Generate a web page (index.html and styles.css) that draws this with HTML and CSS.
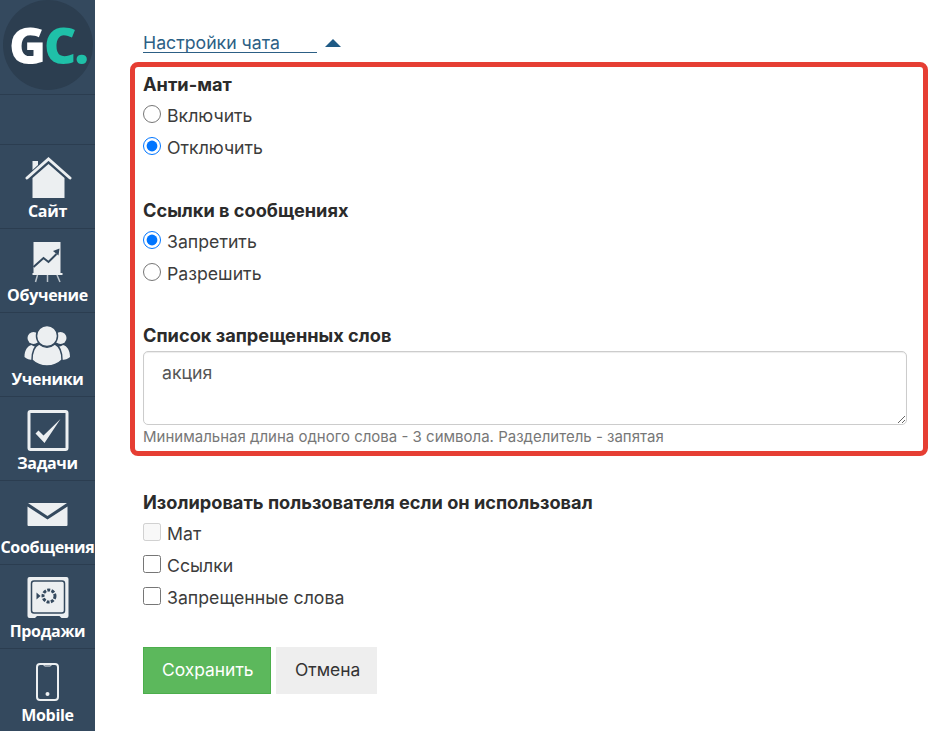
FILE: index.html
```html
<!DOCTYPE html>
<html lang="ru">
<head>
<meta charset="utf-8">
<title>Настройки чата</title>
<link rel="stylesheet" href="styles.css">
</head>
<body>
<div class="page">
  <nav class="sidebar">
    <div class="logo-row"><div class="logo"><span class="g">G</span><span class="c">C.</span></div></div>
    <div class="spacer-row"></div>
    <a class="item">
      <svg class="icon" viewBox="0 0 48 42"><path class="fill" d="M8.500 4H14v4l-5.500 5zM24.500 7 8.500 21v20h32V21z"/><path class="line" d="M3 21 24.500 2 46 21"/></svg>
      <span>Сайт</span>
    </a>
    <a class="item">
      <svg class="icon" viewBox="0 0 48 42"><path class="fill" d="M9.500 1h27v31h-27z"/><path class="fill" d="M8.500 32h30v2h-30z"/><path class="bars" d="M13.500 34l-2 7M23.500 34v7M33 34l3 7"/><path class="trend" d="M9.500 26l10-9 5 4 8-8"/><path class="trendhead" d="M29 10l6.500-2.500-1 7z"/></svg>
      <span>Обучение</span>
    </a>
    <a class="item">
      <svg class="icon" viewBox="0 0 48 42"><circle class="fill" cx="9.500" cy="13" r="6"/><circle class="fill" cx="36.500" cy="13" r="6"/><path class="fill" d="M.5 32c0-7 3-11 7-12 3 2 5 2 7 1-3 3-5 8-5 14-4 0-7-1-9-3zM46 32c0-7-3-11-7-12-3 2-5 2-7 1 3 3 5 8 5 14 4 0 7-1 9-3z"/><circle class="fill head" cx="23" cy="11" r="10.500"/><path class="fill head" d="M8 35c0-9 3-14 7-16 5 4 11 4 16 0 4 2 7 7 7 16-4 4-9 6-15 6s-11-2-15-6z"/></svg>
      <span>Ученики</span>
    </a>
    <a class="item">
      <svg class="icon" viewBox="0 0 48 42"><rect class="box" x="5" y="2.500" width="38" height="38" rx="1.500"/><path class="fill" d="M11.500 24.500l3-3 5 5L36.500 10 20.500 34z"/></svg>
      <span>Задачи</span>
    </a>
    <a class="item">
      <svg class="icon" viewBox="0 0 48 42"><path class="fill" d="M4 10h39L23.500 23z"/><path class="fill" d="M3.500 13.500l20 13 20-13V32a1 1 0 0 1-1 1h-38a1 1 0 0 1-1-1z"/></svg>
      <span>Сообщения</span>
    </a>
    <a class="item">
      <svg class="icon" viewBox="0 0 48 42"><path class="fill" d="M5.500 0h37a2 2 0 0 1 2 2v37a2 2 0 0 1-2 2h-5l-2-2H13l-2 2H5.500a2 2 0 0 1-2-2V2a2 2 0 0 1 2-2z"/><rect class="safe" x="7.500" y="4" width="33" height="32" rx="2.500"/><circle class="dial" cx="25" cy="19" r="6"/><path class="dark" d="M12.500 15.500l4 3.500-4 3.500z"/></svg>
      <span>Продажи</span>
    </a>
    <a class="item">
      <svg class="icon" viewBox="0 0 48 42"><path class="phone" d="M16 3h15a3 3 0 0 1 3 3v30a3 3 0 0 1-3 3H16a3 3 0 0 1-3-3V6a3 3 0 0 1 3-3z"/><path class="phone thin" d="M19 3l1.500 2h6L28 3"/><circle class="fill" cx="23.500" cy="33" r="2"/></svg>
      <span>Mobile</span>
    </a>
  </nav>
  <main class="main">
    <div class="toggle">
      <a class="toggle-link">Настройки чата</a>
      <span class="caret"></span>
    </div>
    <section class="highlight">
      <div class="group">
        <div class="title">Анти-мат</div>
        <label class="opt"><input type="radio" name="a"><span>Включить</span></label>
        <label class="opt"><input type="radio" name="a" checked><span>Отключить</span></label>
      </div>
      <div class="group">
        <div class="title">Ссылки в сообщениях</div>
        <label class="opt"><input type="radio" name="b" checked><span>Запретить</span></label>
        <label class="opt"><input type="radio" name="b"><span>Разрешить</span></label>
      </div>
      <div class="group last">
        <div class="title">Список запрещенных слов</div>
        <textarea class="words">акция</textarea>
        <div class="hint">Минимальная длина одного слова - 3 символа. Разделитель - запятая</div>
      </div>
    </section>
    <section class="isolate">
      <div class="title">Изолировать пользователя если он использовал</div>
      <label class="opt"><input type="checkbox" disabled><span>Мат</span></label>
      <label class="opt"><input type="checkbox"><span>Ссылки</span></label>
      <label class="opt"><input type="checkbox"><span>Запрещенные слова</span></label>
    </section>
    <div class="actions">
      <button class="btn save">Сохранить</button>
      <button class="btn cancel">Отмена</button>
    </div>
  </main>
</div>
</body>
</html>
```
FILE: styles.css
```css
* { box-sizing: border-box; }
html, body { margin: 0; height: 100%; overflow: hidden; background: #fff; }
body { font-family: Inter, "Open Sans", sans-serif; color: #333; font-size: 17.700px; }
.page { display: flex; height: 731px; }

.sidebar { width: 95px; flex: none; background: #34495e; overflow: hidden; }
.logo-row { height: 95px; display: flex; justify-content: center; border-bottom: 1px solid #2b3d50; }
.logo { width: 90px; height: 90px; flex: none; border-radius: 50%; background: #2c3e50; display: flex; align-items: center; justify-content: center; font-family: "Open Sans", sans-serif; font-size: 50px; font-weight: 800; letter-spacing: -2px; line-height: 1; padding-left: 1px; }
.g { color: #fff; }
.c { color: #1fc0a8; }
.spacer-row { height: 50px; border-bottom: 1px solid #2b3d50; }
.item { height: 84px; display: flex; flex-direction: column; align-items: center; border-bottom: 1px solid #2b3d50; padding-top: 12px; color: #fff; font-family: "Open Sans", sans-serif; font-size: 16px; font-weight: 700; white-space: nowrap; letter-spacing: -0.3px; }
.item span { line-height: 20px; margin-top: 2px; }
.icon { width: 48px; height: 42px; display: block; flex: none; }
.fill { fill: #eceff1; }
.line { fill: none; stroke: #eceff1; stroke-width: 3; stroke-linecap: round; }
.bars { stroke: #b9c2ca; stroke-width: 1.500; }
.trend { fill: none; stroke: #34495e; stroke-width: 2; }
.trendhead { fill: #34495e; }
.head { stroke: #34495e; stroke-width: 1.500; }
.box { fill: none; stroke: #eceff1; stroke-width: 3; }
.safe { fill: none; stroke: #34495e; stroke-width: 1.500; }
.dial { fill: none; stroke: #34495e; stroke-width: 3; stroke-dasharray: 3 1.300; }
.dark { fill: #34495e; }
.phone { fill: none; stroke: #eceff1; stroke-width: 2; }
.thin { stroke-width: 1; }

.main { flex: 1; min-width: 0; padding: 33px 13px 0 35px; }
.toggle { display: flex; align-items: center; margin-left: 13px; height: 21px; }
.toggle-link { width: 174px; height: 19px; color: #2c5f85; border-bottom: 1px solid #2c5f85; line-height: 18px; }
.caret { width: 0; height: 0; margin: -2px 0 0 8px; border-left: 8px solid transparent; border-right: 8px solid transparent; border-bottom: 8px solid #1f5a85; }

.highlight { margin-top: 8px; height: 394px; border: 5px solid #e63e33; border-radius: 8px; padding: 5px 16px 0 8px; }
.title { font-weight: 700; font-size: 18.200px; line-height: 24px; color: #2b2b2b; }
.group { height: 126px; }
.group + .group { height: 125px; }
.group.last { height: auto; }
.group .title { margin-bottom: 3px; }
.group.last .title { margin-bottom: 0; }
.opt { display: flex; align-items: center; height: 32px; color: #3c3c3c; }
.opt input { width: 18px; height: 18px; margin: -2px 6px 0 0; flex: none; }
.words { display: block; width: 764px; height: 74px; margin-top: 4px; padding: 9px 18px; border: 1px solid #ccc; border-radius: 5px; font: inherit; color: #555; line-height: 24px; background: #fff; box-shadow: inset 0 1px 1px rgba(0,0,0,.075); }
.hint { font-size: 15px; line-height: 21px; padding-top: 1px; color: #777; }

.isolate { margin: 34px 0 0 13px; }
.isolate .title { margin-bottom: 3px; }
.actions { display: flex; gap: 5px; margin: 34px 0 0 13px; }
.btn { height: 47px; border: 1px solid transparent; font: inherit; font-size: 17.400px; padding: 0 18px 2px; }
.save { width: 128px; background: #5cb85c; border-color: #4cae4c; color: #fff; }
.cancel { width: 101px; background: #eee; color: #333; }
```
